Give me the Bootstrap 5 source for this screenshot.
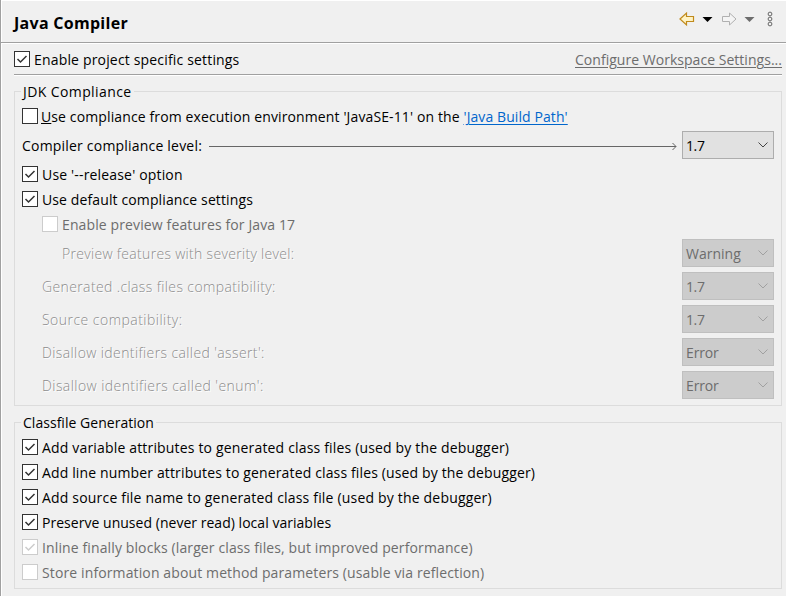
<!DOCTYPE html>
<html lang="en">
<head>
<meta charset="utf-8">
<title>Java Compiler</title>
<link href="https://cdn.jsdelivr.net/npm/bootstrap@5.3.0/dist/css/bootstrap.min.css" rel="stylesheet">
<style>
body{font:14px/24px "Open Sans","Noto Sans",sans-serif;color:#000;background:#f0f0f0;overflow:hidden}
.pane{height:596px;border-left:1px solid #a0a0a0;box-shadow:inset 1px 0 #fff,inset 0 1px #fff;white-space:nowrap}
.pane-head{height:43px;padding:0 10px 0 13px;border-bottom:1px solid #a0a0a0;box-shadow:0 1px #fff}
.pane-title{font-size:16px;font-weight:700;letter-spacing:.28px;line-height:24px;margin:4px 0 0}
.pane-head svg{margin-bottom:4px}
.pane-body{padding:4px 4px 0 13px}
.top-row{height:28px;border-bottom:1px solid #a0a0a0;box-shadow:0 1px #fff}
.ws-link{color:#6d6d6d;line-height:25px;text-underline-offset:2px}
.ws-link:hover{color:#6d6d6d}
.group{border:1px solid #dcdcdc;padding:0 7px}
.group-jdk{height:315px;margin-top:16px}
.group-cls{height:167px;margin-top:16px}
.group-title{font-size:14px;line-height:18px;height:12px;margin:-9px 0 0 -1px;padding:0 2px;background:#f0f0f0;align-self:flex-start}
.group-title+.opt{margin-top:9px}
.opt{height:24px;gap:4px;letter-spacing:.14px;margin-bottom:1px}
.opt>span:last-child:not(.tick-box){padding-top:2px}
.tick-box{width:16px;height:16px;flex:none;border:1px solid #333;background:#fff;display:block}
.opt.off{color:#6d6d6d}
.off .tick-box{border-color:#ccc}
.tick-box svg{display:block;width:14px;height:14px;fill:none;stroke:#333;stroke-width:1.5}
.off .tick-box svg{stroke:#ccc}
.opt.env{gap:3px}
.in-1{margin-left:20px}
.in-2{margin-left:40px}
.field{height:28px;margin-bottom:5px;flex:none}
.field>span:first-child,.combo>span{padding-top:2px}
.field.first{margin:2px 0 3px}
.field.prev{margin-top:2px}
.dim{color:#8c8c8c;font-weight:300;text-shadow:1px 1px #fff}
.combo{width:92px;height:28px;border:1px solid #adadad;background:#e1e1e1;padding:0 5px 0 3px}
.combo.off{background:#ccc;border-color:#bfbfbf;color:#6d6d6d}
.combo svg{width:10px;height:6px;fill:none;stroke:#444}
.combo.off svg{stroke:#a0a0a0}
.combo .num{letter-spacing:-.4px}
.combo .err{letter-spacing:-.15px}
.lead-line{margin:2px 5px 0 7px;height:9px}
.lead-line .shaft{height:1px;background:#666;margin-right:-5px}
.build-link{color:#0066cc;text-underline-offset:2px}
.s0{letter-spacing:.03px}.s1{letter-spacing:.09px}.s2{letter-spacing:.12px}.s3{letter-spacing:.17px}.s4{letter-spacing:.2px}.s5{letter-spacing:.185px}
.t0{letter-spacing:.31px}.t1{letter-spacing:.38px}.t2{letter-spacing:.47px}.t3{letter-spacing:.39px}.t4{letter-spacing:.43px}
.j{letter-spacing:.4px}
</style>
</head>
<body>
<main class="pane">
<header class="pane-head d-flex align-items-center justify-content-between">
<h1 class="pane-title">Java Compiler</h1>
<svg width="98" height="18" viewBox="678 10 98 18" fill="none" aria-label="Navigation">
<path d="M680 19 686.500 13V16.500H693.500V21.500H686.500V25Z" fill="#fff3c4" stroke="#c08a1c" stroke-width="1.200"/>
<path d="M702.500 17H712.500L707.500 22Z" fill="#000"/>
<path d="M736 19 729.500 13V16.500H722.500V21.500H729.500V25Z" fill="#f4f4f4" stroke="#b0b0b0"/>
<path d="M744.500 17H754.500L749.500 22Z" fill="#6d6d6d"/>
<g stroke="#666"><circle cx="770" cy="14" r="1.900"/><circle cx="770" cy="19" r="1.900"/><circle cx="770" cy="24" r="1.900"/></g>
</svg>
</header>
<div class="pane-body">
<div class="top-row d-flex justify-content-between">
<label class="opt d-flex align-items-center s3"><span class="tick-box"><svg viewBox="0 0 14 14"><path d="M2.500 7 5.500 10 11.500 4"/></svg></span><span>Enable project specific settings</span></label>
<a href="#" class="ws-link s0">Configure Workspace Settings...</a>
</div>
<section class="group group-jdk d-flex flex-column">
<h2 class="group-title j">JDK Compliance</h2>
<label class="opt env d-flex align-items-center s2"><span class="tick-box"></span><span><u>U</u>se compliance from execution environment 'JavaSE-11' on the <a href="#" class="build-link s1">'Java Build Path'</a></span></label>
<div class="field first d-flex align-items-center"><span class="s4">Compiler compliance level:</span>
<span class="lead-line d-flex flex-grow-1 align-items-center"><span class="shaft flex-grow-1"></span><svg width="6" height="9" viewBox="0 0 6 9" fill="none" stroke="#666"><path d="M1.500 1 5 4.500 1.500 8"/></svg></span>
<span class="combo d-flex align-items-center justify-content-between"><span class="num">1.7</span><svg viewBox="0 0 10 6"><path d="M.5.500 5 5 9.500.500"/></svg></span></div>
<label class="opt d-flex align-items-center s3"><span class="tick-box"><svg viewBox="0 0 14 14"><path d="M2.500 7 5.500 10 11.500 4"/></svg></span><span>Use '--release' option</span></label>
<label class="opt d-flex align-items-center s2"><span class="tick-box"><svg viewBox="0 0 14 14"><path d="M2.500 7 5.500 10 11.500 4"/></svg></span><span>Use default compliance settings</span></label>
<label class="opt off in-1 d-flex align-items-center s2"><span class="tick-box"></span><span>Enable preview features for Java 17</span></label>
<div class="field prev d-flex align-items-center justify-content-between"><span class="dim in-2 t0">Preview features with severity level:</span><span class="combo off d-flex align-items-center justify-content-between"><span>Warning</span><svg viewBox="0 0 10 6"><path d="M.5.500 5 5 9.500.500"/></svg></span></div>
<div class="field d-flex align-items-center justify-content-between"><span class="dim in-1 t1">Generated .class files compatibility:</span><span class="combo off d-flex align-items-center justify-content-between"><span class="num">1.7</span><svg viewBox="0 0 10 6"><path d="M.5.500 5 5 9.500.500"/></svg></span></div>
<div class="field d-flex align-items-center justify-content-between"><span class="dim in-1 t2">Source compatibility:</span><span class="combo off d-flex align-items-center justify-content-between"><span class="num">1.7</span><svg viewBox="0 0 10 6"><path d="M.5.500 5 5 9.500.500"/></svg></span></div>
<div class="field d-flex align-items-center justify-content-between"><span class="dim in-1 t3">Disallow identifiers called 'assert':</span><span class="combo off d-flex align-items-center justify-content-between"><span class="err">Error</span><svg viewBox="0 0 10 6"><path d="M.5.500 5 5 9.500.500"/></svg></span></div>
<div class="field d-flex align-items-center justify-content-between"><span class="dim in-1 t4">Disallow identifiers called 'enum':</span><span class="combo off d-flex align-items-center justify-content-between"><span class="err">Error</span><svg viewBox="0 0 10 6"><path d="M.5.500 5 5 9.500.500"/></svg></span></div>
</section>
<section class="group group-cls d-flex flex-column">
<h2 class="group-title s0">Classfile Generation</h2>
<label class="opt d-flex align-items-center s3"><span class="tick-box"><svg viewBox="0 0 14 14"><path d="M2.500 7 5.500 10 11.500 4"/></svg></span><span>Add variable attributes to generated class files (used by the debugger)</span></label>
<label class="opt d-flex align-items-center"><span class="tick-box"><svg viewBox="0 0 14 14"><path d="M2.500 7 5.500 10 11.500 4"/></svg></span><span>Add line number attributes to generated class files (used by the debugger)</span></label>
<label class="opt d-flex align-items-center s5"><span class="tick-box"><svg viewBox="0 0 14 14"><path d="M2.500 7 5.500 10 11.500 4"/></svg></span><span>Add source file name to generated class file (used by the debugger)</span></label>
<label class="opt d-flex align-items-center s0"><span class="tick-box"><svg viewBox="0 0 14 14"><path d="M2.500 7 5.500 10 11.500 4"/></svg></span><span>Preserve unused (never read) local variables</span></label>
<label class="opt off d-flex align-items-center s2"><span class="tick-box"><svg viewBox="0 0 14 14"><path d="M2.500 7 5.500 10 11.500 4"/></svg></span><span>Inline finally blocks (larger class files, but improved performance)</span></label>
<label class="opt off d-flex align-items-center s2"><span class="tick-box"></span><span>Store information about method parameters (usable via reflection)</span></label>
</section>
</div>
</main>
</body>
</html>
